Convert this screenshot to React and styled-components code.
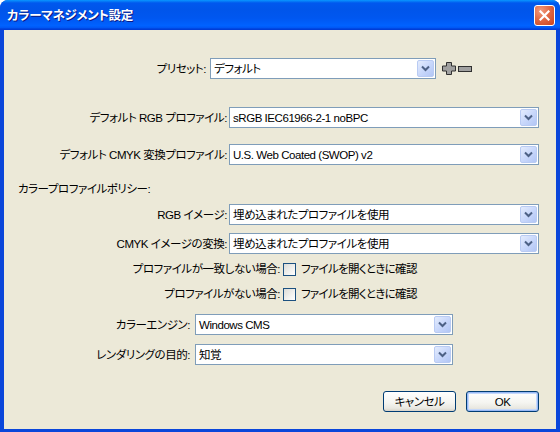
import React from "react";
import styled, { createGlobalStyle } from "styled-components";

const Global = createGlobalStyle`
  html, body { margin: 0; padding: 0; background: #ffffff; }
  body { font-family: "Liberation Sans", "Noto Sans CJK JP", sans-serif; }
  * { box-sizing: border-box; }
`;

const Window = styled.div`
  width: 560px;
  height: 432px;
  display: flex;
  flex-direction: column;
  border-radius: 8px 8px 0 0;
  overflow: hidden;
  background: #0a46da;
`;

const TitleBar = styled.div`
  height: 30px;
  flex: none;
  display: flex;
  align-items: center;
  justify-content: space-between;
  padding: 0 5px 0 7px;
  background: linear-gradient(
    to bottom,
    #0997ff 0%,
    #0058ee 10%,
    #0055ea 30%,
    #0057f0 60%,
    #0062ff 85%,
    #0058f5 92%,
    #003dd7 97%,
    #003dd7 100%
  );
`;

const Title = styled.span`
  color: #ffffff;
  font-family: "Noto Sans CJK JP", "Liberation Sans", sans-serif;
  font-feature-settings: "palt";
  font-size: 12.5px;
  font-weight: 700;
  letter-spacing: -0.3px;
  text-shadow: 1px 1px 0 #0a1883;
  line-height: 16px;
`;

const CloseButton = styled.div`
  width: 21px;
  height: 21px;
  border: 1px solid #ffffff;
  border-radius: 3px;
  background: radial-gradient(circle at 30% 25%, #f29b7e 0%, #e16a46 45%, #c8421d 100%);
  display: flex;
  align-items: center;
  justify-content: center;
`;

const Client = styled.div`
  flex: 1;
  margin: 0 4px 3px 4px;
  background: #ece9d8;
  display: flex;
  flex-direction: column;
  font-size: 11.5px;
  letter-spacing: -0.45px;
  color: #000000;
  font-feature-settings: "palt";
`;

const Row = styled.div`
  display: flex;
  align-items: center;
  height: ${(p) => p.$h || 21}px;
  margin-top: ${(p) => p.$gap}px;
  gap: ${(p) => p.$spacing || 2}px;
`;

const Label = styled.span`
  width: ${(p) => p.$w}px;
  flex: none;
  text-align: right;
  white-space: nowrap;
  line-height: 16px;
`;

const SectionLabel = styled.div`
  margin-top: ${(p) => p.$gap}px;
  padding-left: 14px;
  line-height: 16px;
  height: 16px;
`;

const SelectBox = styled.div`
  width: ${(p) => p.$w}px;
  height: 21px;
  flex: none;
  border: 1px solid #7f9db9;
  background: #ffffff;
  display: flex;
  align-items: center;
`;

const SelectText = styled.span`
  flex: 1;
  padding-left: 3px;
  white-space: nowrap;
  overflow: hidden;
  line-height: 16px;
`;

const ArrowButton = styled.div`
  width: 17px;
  height: 17px;
  margin-right: 1px;
  flex: none;
  border: 1px solid #b9cbf3;
  border-radius: 2px;
  background: linear-gradient(135deg, #e4ecfd 0%, #c9d8fb 50%, #b2c6f5 100%);
  display: flex;
  align-items: center;
  justify-content: center;
`;

const IconGroup = styled.div`
  display: flex;
  align-items: center;
  gap: 2px;
  margin-left: 2px;
`;

const CheckBox = styled.div`
  width: 13px;
  height: 13px;
  flex: none;
  border: 1px solid #1c5180;
  background: linear-gradient(135deg, #dcdcd7 0%, #f2f2ef 60%, #ffffff 100%);
`;

const CheckText = styled.span`
  white-space: nowrap;
  line-height: 16px;
  margin-left: 2px;
  letter-spacing: -0.7px;
`;

const ButtonRow = styled.div`
  display: flex;
  justify-content: flex-end;
  gap: 10px;
  margin-top: 26px;
  padding-right: 17px;
`;

const Button = styled.div`
  width: 73px;
  height: 21px;
  border: 1px solid #003c74;
  border-radius: 3px;
  background: linear-gradient(to bottom, #ffffff 0%, #f5f5f1 55%, #e9e8e1 85%, #d8d3c8 100%);
  display: flex;
  align-items: center;
  justify-content: center;
  line-height: 16px;
  box-shadow: ${(p) =>
    p.$default ? "inset 0 0 0 1px #97b8f5, inset 0 0 0 2px #c4d8fb" : "none"};
`;

const Chevron = () => (
  <svg width="9" height="7" viewBox="0 0 9 7">
    <path d="M1 1.5 L4.5 5 L8 1.5" fill="none" stroke="#4d6185" strokeWidth="2" />
  </svg>
);

const Select = ({ w, children }) => (
  <SelectBox $w={w}>
    <SelectText>{children}</SelectText>
    <ArrowButton>
      <Chevron />
    </ArrowButton>
  </SelectBox>
);

const PlusIcon = () => (
  <svg width="14" height="13" viewBox="0 0 14 13">
    <path
      d="M4.5 0.5 H9.5 V4 H13.5 V9 H9.5 V12.5 H4.5 V9 H0.5 V4 H4.5 Z"
      fill="#a0a0a0"
      stroke="#303030"
      strokeWidth="1"
    />
  </svg>
);

const MinusIcon = () => (
  <svg width="14" height="6" viewBox="0 0 14 6">
    <rect x="0.5" y="0.5" width="13" height="5" fill="#a0a0a0" stroke="#303030" strokeWidth="1" />
  </svg>
);

const CloseX = () => (
  <svg width="11" height="11" viewBox="0 0 11 11">
    <path d="M1.5 1.5 L9.5 9.5 M9.5 1.5 L1.5 9.5" stroke="#ffffff" strokeWidth="2.2" strokeLinecap="square" />
  </svg>
);

export default function App() {
  return (
    <>
      <Global />
      <Window>
        <TitleBar>
          <Title>カラーマネジメント設定</Title>
          <CloseButton>
            <CloseX />
          </CloseButton>
        </TitleBar>
        <Client>
          <Row $gap={28} $spacing={4}>
            <Label $w={202}>プリセット:</Label>
            <Select w={226}>デフォルト</Select>
            <IconGroup>
              <PlusIcon />
              <MinusIcon />
            </IconGroup>
          </Row>

          <Row $gap={28}>
            <Label $w={223}>デフォルト RGB プロファイル:</Label>
            <Select w={310}>sRGB IEC61966-2-1 noBPC</Select>
          </Row>

          <Row $gap={16}>
            <Label $w={223}>デフォルト CMYK 変換プロファイル:</Label>
            <Select w={310}>U.S. Web Coated (SWOP) v2</Select>
          </Row>

          <SectionLabel $gap={16}>カラープロファイルポリシー:</SectionLabel>

          <Row $gap={7}>
            <Label $w={223}>RGB イメージ:</Label>
            <Select w={310}>埋め込まれたプロファイルを使用</Select>
          </Row>

          <Row $gap={8}>
            <Label $w={223}>CMYK イメージの変換:</Label>
            <Select w={310}>埋め込まれたプロファイルを使用</Select>
          </Row>

          <Row $gap={7} $h={16} $spacing={3}>
            <Label $w={276}>プロファイルが一致しない場合:</Label>
            <CheckBox />
            <CheckText>ファイルを開くときに確認</CheckText>
          </Row>

          <Row $gap={9} $h={16} $spacing={3}>
            <Label $w={276}>プロファイルがない場合:</Label>
            <CheckBox />
            <CheckText>ファイルを開くときに確認</CheckText>
          </Row>

          <Row $gap={12} $spacing={5}>
            <Label $w={186}>カラーエンジン:</Label>
            <Select w={258}>Windows CMS</Select>
          </Row>

          <Row $gap={9} $spacing={5}>
            <Label $w={186}>レンダリングの目的:</Label>
            <Select w={258}>知覚</Select>
          </Row>

          <ButtonRow>
            <Button>キャンセル</Button>
            <Button $default>OK</Button>
          </ButtonRow>
        </Client>
      </Window>
    </>
  );
}
